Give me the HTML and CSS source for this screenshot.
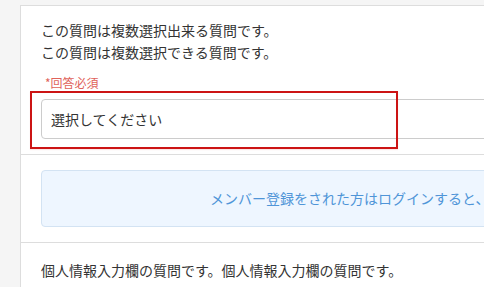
FILE: index.html
```html
<!DOCTYPE html>
<html lang="ja">
<head>
    <meta charset="UTF-8">
    <title>アンケート</title>
    <meta name="viewport" content="width=device-width,initial-scale=1.0">
    <link rel="stylesheet" href="styles.css">
</head>
<body>
<div class="form-page">
    <div class="form-panel">
        <div class="form-section form-section--question">
            <p class="question-text">この質問は複数選択出来る質問です。<br>この質問は複数選択できる質問です。</p>
            <div class="required-label">*回答必須</div>
            <div class="select-box">選択してください</div>
            <div class="highlight-frame"></div>
        </div>
        <div class="form-section">
            <div class="login-notice">メンバー登録をされた方はログインすると、</div>
        </div>
        <div class="form-section form-section--last">
            <p class="question-text">個人情報入力欄の質問です。個人情報入力欄の質問です。</p>
        </div>
    </div>
</div>
</body>
</html>
```

FILE: styles.css
```css
html, body {
    margin: 0;
    height: 100%;
    overflow: hidden;
}

body {
    background-color: #f5f5f5;
    font-family: "Noto Sans CJK JP", "Noto Sans", sans-serif;
    font-size: 14px;
    color: #333333;
}

.form-page {
    padding-left: 20px;
    padding-top: 5px;
}

/*右側のパネル*/
.form-panel {
    width: 1000px;
    background-color: white;
    border-left: 1px solid #dddddd;
    border-top: 1px solid #dddddd;
    min-height: 290px;
}

.form-section {
    position: relative;
    padding: 15px 20px;
    border-bottom: 1px solid #dddddd;
}

.form-section--question {
    padding-top: 13px;
}

.form-section--last {
    padding-top: 16px;
    border-bottom: 0;
}

.question-text {
    margin: 0;
    line-height: 22px;
}

/*必須ラベル*/
.required-label {
    margin-top: 11px;
    margin-bottom: 7px;
    padding-left: 4px;
    font-size: 12px;
    line-height: 18px;
    color: #e0625a;
}

/*セレクト*/
.select-box {
    height: 38px;
    line-height: 38px;
    padding: 0 9px;
    border: 1px solid #cccccc;
    border-radius: 4px;
    background-color: white;
}

/*赤枠(注釈)*/
.highlight-frame {
    position: absolute;
    left: 9px;
    top: 85px;
    width: 364px;
    height: 54px;
    border: 2px solid #cc1414;
    box-shadow: 0 1px 1px rgba(230, 60, 60, .12);
    pointer-events: none;
}

/*ログイン案内*/
.login-notice {
    height: 55px;
    line-height: 55px;
    padding-left: 168px;
    white-space: nowrap;
    background-color: #eef6ff;
    border: 1px solid #d3e3f3;
    border-radius: 4px;
    color: #4f95d8;
}
```
